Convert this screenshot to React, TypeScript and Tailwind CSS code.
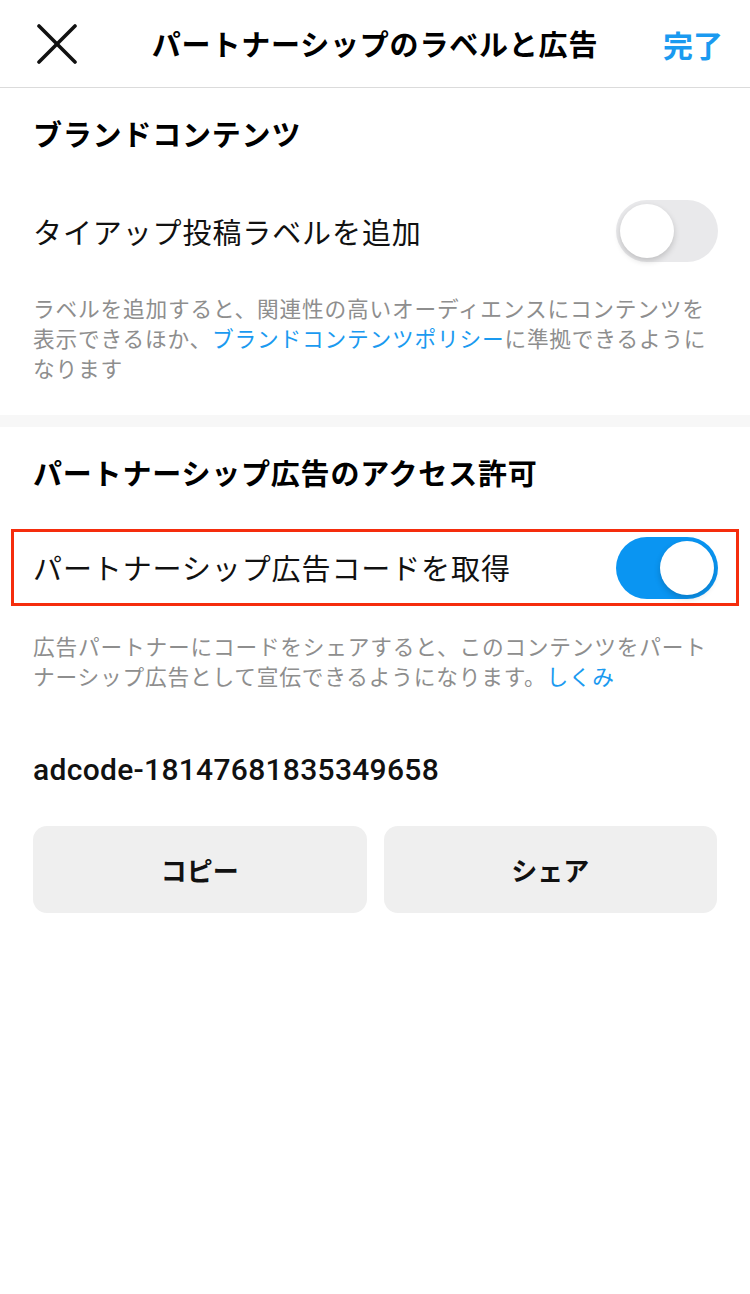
import React from "react"

const jp = { fontFamily: '"Noto Sans CJK JP", "Noto Sans", sans-serif' }

function Toggle({ on }: { on: boolean }) {
  return (
    <div
      className={
        on
          ? "relative w-[102px] h-[62px] rounded-full bg-[#0a95f2] shrink-0"
          : "relative w-[102px] h-[62px] rounded-full bg-[#e9e9eb] shrink-0"
      }
    >
      <div
        className={
          on
            ? "absolute top-[4px] right-[4px] w-[54px] h-[54px] rounded-full bg-white shadow-[0_3px_6px_rgba(0,0,0,0.18)]"
            : "absolute top-[4px] left-[4px] w-[54px] h-[54px] rounded-full bg-white shadow-[0_3px_6px_rgba(0,0,0,0.18)]"
        }
      />
    </div>
  )
}

export default function App() {
  return (
    <div className="w-[750px] h-[1294px] bg-white text-black" style={jp}>
      <header className="grid grid-cols-[1fr_auto_1fr] items-center h-[88px] border-b border-[#dbdbdb]">
        <div className="pl-[37px]">
          <svg width="40" height="40" viewBox="0 0 40 40" fill="none" stroke="#111" strokeWidth="3.6" strokeLinecap="round">
            <line x1="2" y1="2" x2="38" y2="38" />
            <line x1="38" y1="2" x2="2" y2="38" />
          </svg>
        </div>
        <h1 className="text-[29px] font-bold leading-none tracking-[0.8px]">パートナーシップのラベルと広告</h1>
        <div className="flex justify-end pr-[27px]">
          <span className="text-[30px] font-bold leading-none text-[#1a9af0]">完了</span>
        </div>
      </header>

      <section className="px-[33px] pt-[27px] pb-[32px]">
        <h2 className="text-[29px] font-bold leading-[36px] tracking-[0.8px]">ブランドコンテンツ</h2>
        <div className="flex items-center justify-between mt-[49px]">
          <span className="text-[29px] leading-none tracking-[0.9px] text-[#111]">タイアップ投稿ラベルを追加</span>
          <div className="mr-[-1px]">
            <Toggle on={false} />
          </div>
        </div>
        <p className="mt-[31px] text-[21.7px] leading-[30px] tracking-[0.8px] text-[#8e8e8e] whitespace-nowrap">
          ラベルを追加すると、関連性の高いオーディエンスにコンテンツを
          <br />
          表示できるほか、<span className="text-[#1a9af0]">ブランドコンテンツポリシー</span>に準拠できるように
          <br />
          なります
        </p>
      </section>

      <div className="h-[12px] bg-[#f7f7f7]" />

      <section className="pt-[27px]">
        <h2 className="px-[33px] text-[29px] font-bold leading-[36px] tracking-[0.8px]">パートナーシップ広告のアクセス許可</h2>
        <div className="mx-[11px] mt-[39px] h-[77px] border-[3px] border-[#f52d0d] flex items-center justify-between pl-[19px] pr-[18px]">
          <span className="text-[29px] leading-none tracking-[0.9px] text-[#111]">パートナーシップ広告コードを取得</span>
          <Toggle on={true} />
        </div>
        <p className="px-[33px] mt-[25px] text-[21.7px] leading-[30px] tracking-[0.8px] text-[#8e8e8e] whitespace-nowrap">
          広告パートナーにコードをシェアすると、このコンテンツをパート
          <br />
          ナーシップ広告として宣伝できるようになります。<span className="text-[#1a9af0]">しくみ</span>
        </p>
        <div
          className="px-[33px] mt-[64px] text-[30px] font-medium leading-none tracking-[0.3px] text-[#111]"
          style={{ fontFamily: 'Roboto, "Noto Sans", sans-serif' }}
        >
          adcode-18147681835349658
        </div>
        <div className="px-[33px] mt-[41px] grid grid-cols-2 gap-[17px]">
          <button className="h-[87px] rounded-[14px] bg-[#efefef] text-[26px] font-bold text-[#111]">コピー</button>
          <button className="h-[87px] rounded-[14px] bg-[#efefef] text-[26px] font-bold text-[#111]">シェア</button>
        </div>
      </section>
    </div>
  )
}
